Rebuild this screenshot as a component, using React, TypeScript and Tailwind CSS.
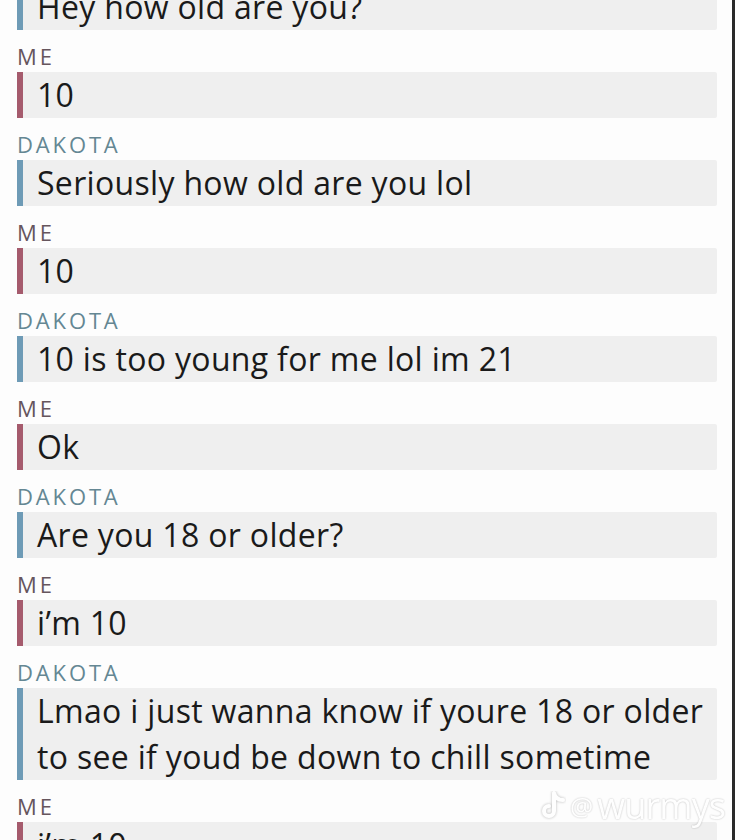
const messages: { from: "me" | "dakota"; text: string }[] = [
  { from: "dakota", text: "Hey how old are you?" },
  { from: "me", text: "10" },
  { from: "dakota", text: "Seriously how old are you lol" },
  { from: "me", text: "10" },
  { from: "dakota", text: "10 is too young for me lol im 21" },
  { from: "me", text: "Ok" },
  { from: "dakota", text: "Are you 18 or older?" },
  { from: "me", text: "i’m 10" },
  { from: "dakota", text: "Lmao i just wanna know if youre 18 or older to see if youd be down to chill sometime" },
  { from: "me", text: "i’m 10" },
];

const TikTokNote = () => (
  <svg width="26" height="30" viewBox="0 0 26 30" fill="none">
    <path
      d="M14 2v18a5 5 0 1 1-5-5M14 2c1 4 4 7 9 7"
      stroke="white"
      strokeWidth="4"
      strokeLinecap="round"
      style={{ filter: "drop-shadow(0 0 1.5px rgba(0,0,0,0.3))" }}
    />
  </svg>
);

export default function App() {
  return (
    <div className="w-[735px] h-[840px] overflow-hidden bg-[#fdfdfd] border-r-[3px] border-[#2a2a2a] relative font-['Open_Sans',sans-serif]">
      <div className="-mt-[16px] pl-[17px] pr-[15px]">
        {messages.map((m, i) => (
          <div key={i}>
            {i > 0 && (
              <div
                className={`pt-[15px] pb-[5px] leading-[22px] text-[22px] tracking-[0.13em] ${
                  m.from === "me" ? "text-[#66555d]" : "text-[#648793]"
                }`}
              >
                {m.from === "me" ? "ME" : "DAKOTA"}
              </div>
            )}
            <div className="flex bg-[#efefef] rounded-[2px]">
              <div
                className={`w-[6px] shrink-0 ${m.from === "me" ? "bg-[#a55b6d]" : "bg-[#6e9bb6]"}`}
              />
              <p className="pl-[14px] text-[32px] tracking-[0.01em] leading-[46px] text-[#1a1a1a]">{m.text}</p>
            </div>
          </div>
        ))}
      </div>

      <div className="absolute left-[540px] top-[788px] flex items-center gap-1 opacity-90">
        <TikTokNote />
        <span className="text-[26px] leading-none text-white [text-shadow:0_0_2px_rgba(0,0,0,0.3)]">@</span>
        <span className="text-[36px] leading-none text-white tracking-tight [text-shadow:0_0_2px_rgba(0,0,0,0.3)]">
          wurmys
        </span>
      </div>
    </div>
  );
}
